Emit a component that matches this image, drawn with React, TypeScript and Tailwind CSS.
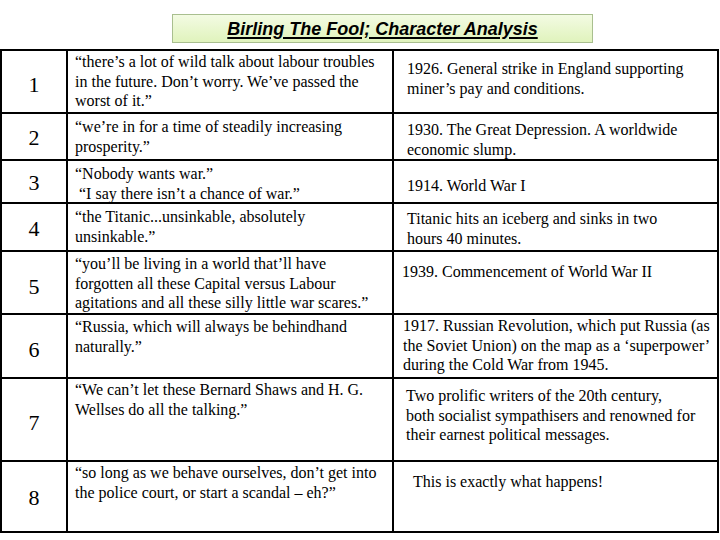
import type { ReactNode } from 'react';

type Row = {
  n: string;
  h: string;
  numPad: string;
  quotePad: string;
  quote: ReactNode;
  notePad: string;
  note: ReactNode;
};

const rows: Row[] = [
  {
    n: '1',
    h: 'h-[63px]',
    numPad: 'pt-[5px]',
    quotePad: 'pt-[1px]',
    quote: (
      <>
        “there’s a lot of wild talk about labour troubles
        <br />
        in the future. Don’t worry. We’ve passed the
        <br />
        worst of it.”
      </>
    ),
    notePad: 'pt-[8px] pl-[13px]',
    note: (
      <>
        1926. General strike in England supporting
        <br />
        miner’s pay and conditions.
      </>
    ),
  },
  {
    n: '2',
    h: 'h-[47px]',
    numPad: 'pt-[2px]',
    quotePad: 'pt-[3px]',
    quote: (
      <>
        “we’re in for a time of steadily increasing
        <br />
        prosperity.”
      </>
    ),
    notePad: 'pt-[6px] pl-[13px]',
    note: (
      <>
        1930. The Great Depression. A worldwide
        <br />
        economic slump.
      </>
    ),
  },
  {
    n: '3',
    h: 'h-[43px]',
    numPad: 'pt-[1px]',
    quotePad: 'pt-[3px]',
    quote: (
      <>
        “Nobody wants war.”
        <br />
        &nbsp;“I say there isn’t a chance of war.”
      </>
    ),
    notePad: 'pt-[15px] pl-[13px]',
    note: <>1914. World War I</>,
  },
  {
    n: '4',
    h: 'h-[48px]',
    numPad: 'pt-[3px]',
    quotePad: 'pt-[3px]',
    quote: (
      <>
        “the Titanic...unsinkable, absolutely
        <br />
        unsinkable.”
      </>
    ),
    notePad: 'pt-[5px] pl-[13px]',
    note: (
      <>
        Titanic hits an iceberg and sinks in two
        <br />
        hours 40 minutes.
      </>
    ),
  },
  {
    n: '5',
    h: 'h-[63px]',
    numPad: 'pt-[8px]',
    quotePad: 'pt-[2px]',
    quote: (
      <>
        “you’ll be living in a world that’ll have
        <br />
        forgotten all these Capital versus Labour
        <br />
        agitations and all these silly little war scares.”
      </>
    ),
    notePad: 'pt-[10px] pl-[8px]',
    note: <>1939. Commencement of World War II</>,
  },
  {
    n: '6',
    h: 'h-[64px]',
    numPad: 'pt-[6px]',
    quotePad: 'pt-[2px]',
    quote: (
      <>
        “Russia, which will always be behindhand
        <br />
        naturally.”
      </>
    ),
    notePad: 'pt-[1px] pl-[9px]',
    note: (
      <>
        1917. Russian Revolution, which put Russia (as
        <br />
        the Soviet Union) on the map as a ‘superpower’
        <br />
        during the Cold War from 1945.
      </>
    ),
  },
  {
    n: '7',
    h: 'h-[83px]',
    numPad: 'pt-[6px]',
    quotePad: 'pt-[1px]',
    quote: (
      <>
        “We can’t let these Bernard Shaws and H. G.
        <br />
        Wellses do all the talking.”
      </>
    ),
    notePad: 'pt-[7px] pl-[12px]',
    note: (
      <>
        Two prolific writers of the 20th century,
        <br />
        both socialist sympathisers and renowned for
        <br />
        their earnest political messages.
      </>
    ),
  },
  {
    n: '8',
    h: 'h-[69px]',
    numPad: 'pt-[2px]',
    quotePad: 'pt-[1px]',
    quote: (
      <>
        “so long as we behave ourselves, don’t get into
        <br />
        the police court, or start a scandal – eh?”
      </>
    ),
    notePad: 'pt-[10px] pl-[19px]',
    note: <>This is exactly what happens!</>,
  },
];

export default function App() {
  return (
    <div className="w-[720px] h-[540px] bg-white overflow-hidden font-['Liberation_Serif','Times_New_Roman',serif] text-black">
      {/* title */}
      <div className="pt-[14px] pl-[172px]">
        <div className="w-[421px] h-[29px] flex items-center justify-center border border-[#a9bf8f] bg-gradient-to-b from-[#f3fbe3] to-[#e0f3bc]">
          <h1 className="font-['Liberation_Sans',Arial,sans-serif] font-bold italic underline text-[18px] leading-none decoration-[1.5px] underline-offset-[2px]">
            Birling The Fool; Character Analysis
          </h1>
        </div>
      </div>

      {/* table */}
      <div className="mt-[6px] w-[719px] border-2 border-black">
        {rows.map((r, i) => (
          <div
            key={r.n}
            className={`flex ${r.h} ${i < rows.length - 1 ? 'border-b-2 border-black' : ''}`}
          >
            <div className={`w-[66px] shrink-0 border-r-2 border-black flex items-center justify-center text-[22px] ${r.numPad}`}>
              {r.n}
            </div>
            <div className={`w-[326px] shrink-0 border-r-2 border-black pl-[7px] text-[16px] leading-[19.5px] whitespace-nowrap overflow-hidden ${r.quotePad}`}>
              {r.quote}
            </div>
            <div className={`flex-1 text-[16px] leading-[19.5px] whitespace-nowrap overflow-hidden ${r.notePad}`}>
              {r.note}
            </div>
          </div>
        ))}
      </div>
    </div>
  );
}
